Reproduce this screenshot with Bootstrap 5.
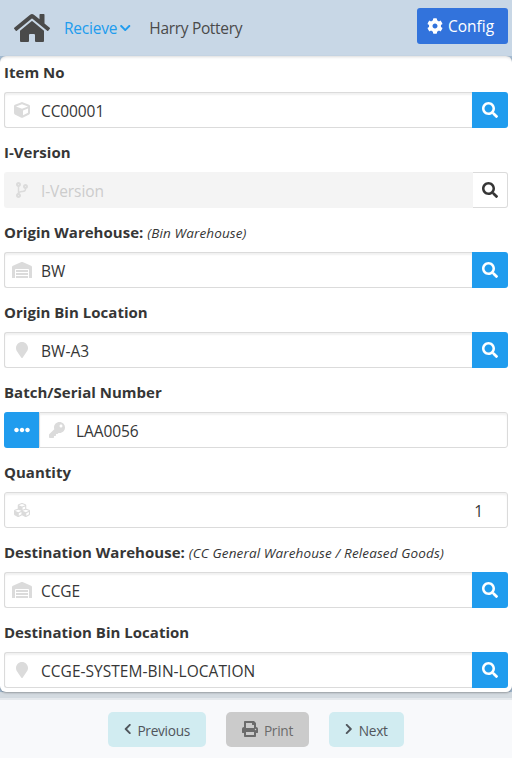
<!DOCTYPE html>
<html lang="en">
<head>
<meta charset="utf-8">
<meta name="viewport" content="width=device-width, initial-scale=1">
<title>Recieve</title>
<link href="https://cdn.jsdelivr.net/npm/bootstrap@5.3.0/dist/css/bootstrap.min.css" rel="stylesheet">
<style>
body{font-family:"Open Sans","Noto Sans",sans-serif;font-size:15.5px;line-height:24px;color:#363636;background:#a3bad0;height:758px;overflow:hidden}
.ico{fill:currentColor;height:16px;width:auto;display:block;flex:none}
.topbar{height:56px;background:#c8d7e6;color:#4a4a4a;padding:0 4px 0 14px}
.topbar .ico-home{height:32px}
.mode{color:#209cee;margin-left:14px;gap:3px;letter-spacing:-.2px}
.mode .ico{height:12px}
.user-name{margin-left:18.5px;letter-spacing:-.33px}
.btn-config{height:36px;width:91px;background:#3273dc;color:#fff;border-radius:3px;font-size:15.5px;gap:5px;margin-top:-4px}
.btn-config .ico{margin-left:-2px}
.btn-config span{padding-top:2px;margin-right:2px}
.panel{height:636px;background:#fff;border-radius:6px;padding:4px;gap:12px;box-shadow:0 1px 2px rgba(10,10,10,.3),inset 0 4px 3px -3px rgba(10,10,10,.15)}
.field-label{font-weight:700;margin-bottom:8px;height:24px;font-size:15px;letter-spacing:.02px;white-space:nowrap}
.field-label em{font-weight:400;font-size:13.5px;letter-spacing:.13px}
.box{height:36px;border:1px solid #dbdbdb;border-radius:3px;box-shadow:inset 0 2px 2px rgba(10,10,10,.06);background:#fff;min-width:0}
.box.has-end{border-right:0;border-radius:3px 0 0 3px}
.box.has-start{border-radius:0 3px 3px 0}
.box.off{background:#f4f4f4;border-color:#f4f4f4;box-shadow:none;color:#ccc}
.box .glyph{width:34px;color:#dbdbdb;margin-top:-1px}
.box .val{padding-left:2px;padding-top:2px;letter-spacing:-.1px}
.box .val.long{letter-spacing:.03px}
.act{width:36px;height:36px;background:#209cee;color:#fff;border-radius:0 3px 3px 0}
.act.start{width:35px;border-radius:3px 0 0 3px}
.act .ico{margin-top:-1px}
.act.plain{width:35px;background:#fff;color:#363636;border:1px solid #dbdbdb;border-left:0}
.foot{height:60px;background:#f8f9fb;gap:20px;padding-top:12px;box-shadow:0 0 0 2px #e4e8ec}
.strip{background:#d3dae0}
.step{height:35px;border-radius:5px;background:#d1ecf1;color:#50555b;font-size:13.7px;line-height:21px;gap:6px;letter-spacing:-.28px;padding-top:1px}
.step .ico{height:12px;margin-top:-3px}
.step.w1{width:98px}.step.w2{width:83px}.step.w3{width:75px}
.step.w2{background:#cbcbcb;color:#6b6b6b}.step.w2 .ico{height:16px}
</style>
</head>
<body class="d-flex flex-column">
<svg class="d-none" aria-hidden="true">
<symbol id="search" viewBox="0 0 512 512"><path d="M505 442.7L405.3 343c-4.5-4.5-10.6-7-17-7H372c27.6-35.3 44-79.7 44-128C416 93.1 322.9 0 208 0S0 93.1 0 208s93.1 208 208 208c48.3 0 92.7-16.4 128-44v16.3c0 6.4 2.5 12.5 7 17l99.7 99.7c9.4 9.4 24.6 9.4 33.9 0l28.3-28.3c9.4-9.4 9.4-24.6.1-34zM208 336c-70.7 0-128-57.2-128-128 0-70.7 57.2-128 128-128 70.7 0 128 57.2 128 128 0 70.7-57.2 128-128 128z"/></symbol>
<symbol id="warehouse" viewBox="0 0 640 512"><path d="M504 352H136.4c-4.4 0-8 3.6-8 8l-.1 48c0 4.4 3.6 8 8 8H504c4.4 0 8-3.6 8-8v-48c0-4.4-3.6-8-8-8zm0 96H136.1c-4.4 0-8 3.6-8 8l-.1 48c0 4.4 3.6 8 8 8h368c4.4 0 8-3.6 8-8v-48c0-4.4-3.6-8-8-8zm0-192H136.6c-4.4 0-8 3.6-8 8l-.1 48c0 4.4 3.6 8 8 8H504c4.4 0 8-3.6 8-8v-48c0-4.4-3.6-8-8-8zm106.5-139L338.4 3.7a48.15 48.15 0 0 0-36.9 0L29.5 117C11.7 124.5 0 141.9 0 161.3V504c0 4.4 3.6 8 8 8h80c4.4 0 8-3.6 8-8V256c0-17.6 14.6-32 32.6-32h382.8c18 0 32.6 14.4 32.6 32v248c0 4.4 3.6 8 8 8h80c4.4 0 8-3.6 8-8V161.3c0-19.4-11.7-36.8-29.5-44.3z"/></symbol>
<symbol id="marker" viewBox="0 0 384 512"><path d="M172.268 501.67C26.97 291.031 0 269.413 0 192 0 85.961 85.961 0 192 0s192 85.961 192 192c0 77.413-26.97 99.031-172.268 309.67-9.535 13.774-29.93 13.773-39.464 0z"/></symbol>
</svg>

<nav class="topbar d-flex align-items-center flex-shrink-0">
  <svg class="ico ico-home" width="36" viewBox="0 0 576 512"><path d="M280.37 148.26L96 300.11V464a16 16 0 0 0 16 16l112.06-.29a16 16 0 0 0 15.92-16V368a16 16 0 0 1 16-16h64a16 16 0 0 1 16 16v95.64a16 16 0 0 0 16 16.05L464 480a16 16 0 0 0 16-16V300L295.67 148.26a12.19 12.19 0 0 0-15.3 0zM571.6 251.47L488 182.56V44.05a12 12 0 0 0-12-12h-56a12 12 0 0 0-12 12v72.61L318.47 43a48 48 0 0 0-61 0L4.34 251.47a12 12 0 0 0-1.6 16.9l25.5 31A12 12 0 0 0 45.15 301l235.22-193.74a12.19 12.19 0 0 1 15.3 0L530.9 301a12 12 0 0 0 16.9-1.6l25.5-31a12 12 0 0 0-1.7-16.93z"/></svg>
  <div class="mode d-flex align-items-center"><span class="t-mode">Recieve</span><svg class="ico" viewBox="0 0 448 512"><path d="M207.029 381.476L12.686 187.132c-9.373-9.373-9.373-24.569 0-33.941l22.667-22.667c9.357-9.357 24.522-9.375 33.901-.04L224 284.505l154.745-154.021c9.379-9.335 24.544-9.317 33.901.04l22.667 22.667c9.373 9.373 9.373 24.569 0 33.941L240.971 381.476c-9.373 9.372-24.569 9.372-33.942 0z"/></svg></div>
  <span class="user-name">Harry Pottery</span>
  <button class="btn btn-config border-0 p-0 ms-auto d-flex align-items-center justify-content-center"><svg class="ico" viewBox="0 0 512 512"><path d="M487.4 315.7l-42.6-24.6c4.3-23.2 4.3-47 0-70.2l42.6-24.6c4.9-2.8 7.1-8.6 5.5-14-11.1-35.6-30-67.8-54.7-94.6-3.8-4.1-10-5.1-14.8-2.3L380.8 110c-17.9-15.4-38.5-27.3-60.8-35.1V25.8c0-5.6-3.9-10.5-9.4-11.7-36.7-8.2-74.3-7.8-109.2 0-5.5 1.2-9.4 6.1-9.4 11.7V75c-22.2 7.9-42.8 19.8-60.8 35.1L88.7 85.5c-4.9-2.8-11-1.9-14.8 2.3-24.7 26.7-43.6 58.9-54.7 94.6-1.7 5.4.6 11.2 5.5 14L67.3 221c-4.3 23.2-4.3 47 0 70.2l-42.6 24.6c-4.9 2.8-7.1 8.6-5.5 14 11.1 35.6 30 67.8 54.7 94.6 3.8 4.1 10 5.1 14.8 2.3l42.6-24.6c17.9 15.4 38.5 27.3 60.8 35.1v49.2c0 5.6 3.9 10.5 9.4 11.7 36.7 8.2 74.3 7.8 109.2 0 5.5-1.2 9.4-6.1 9.4-11.7v-49.2c22.2-7.9 42.8-19.8 60.8-35.1l42.6 24.6c4.9 2.8 11 1.9 14.8-2.3 24.7-26.7 43.6-58.9 54.7-94.6 1.5-5.5-.7-11.3-5.6-14.1zM256 336c-44.1 0-80-35.9-80-80s35.9-80 80-80 80 35.9 80 80-35.9 80-80 80z"/></svg><span>Config</span></button>
</nav>

<main class="panel d-flex flex-column flex-shrink-0 position-relative">
  <div>
    <div class="field-label"><span>Item No</span></div>
    <div class="d-flex"><div class="box has-end flex-grow-1 d-flex align-items-center"><span class="glyph d-flex justify-content-center"><svg class="ico" viewBox="0 0 512 512"><path d="M239.1 6.3l-208 78c-18.7 7-31.1 25-31.1 45v225.1c0 18.2 10.3 34.8 26.5 42.9l208 104c13.5 6.8 29.4 6.8 42.9 0l208-104c16.3-8.1 26.5-24.8 26.5-42.9V129.3c0-20-12.4-37.9-31.1-44.9l-208-78C262 2.2 250 2.2 239.1 6.3zM256 68.4l192 72v1.1l-192 78-192-78v-1.1l192-72zm32 356V275.5l160-65v133.9l-160 80z"/></svg></span><span class="val">CC00001</span></div><button class="act border-0 p-0 d-flex align-items-center justify-content-center" aria-label="Search"><svg class="ico" viewBox="0 0 512 512"><use href="#search"/></svg></button></div>
  </div>
  <div>
    <div class="field-label"><span>I-Version</span></div>
    <div class="d-flex"><div class="box off has-end flex-grow-1 d-flex align-items-center"><span class="glyph d-flex justify-content-center"><svg class="ico" viewBox="0 0 384 512"><path d="M384 144c0-44.2-35.8-80-80-80s-80 35.8-80 80c0 36.4 24.3 67.1 57.5 76.8-.6 16.1-4.2 28.5-11 36.9-15.4 19.2-49.3 22.4-85.2 25.7-28.2 2.6-57.4 5.4-81.3 16.9v-144c32.5-10.2 56-40.5 56-76.3 0-44.2-35.8-80-80-80S0 35.8 0 80c0 35.8 23.5 66.1 56 76.3v199.3C23.5 365.9 0 396.2 0 432c0 44.2 35.8 80 80 80s80-35.8 80-80c0-34-21.2-63.1-51.2-74.6 3.1-5.2 7.8-9.8 14.9-13.4 16.2-8.2 40.4-10.4 66.1-12.8 42.2-3.9 90-8.4 118.2-43.4 14-17.4 21.1-39.8 21.6-67.9 31.6-10.8 54.4-40.7 54.4-75.9zM80 64c8.8 0 16 7.2 16 16s-7.2 16-16 16-16-7.2-16-16 7.2-16 16-16zm0 384c-8.8 0-16-7.2-16-16s7.2-16 16-16 16 7.2 16 16-7.2 16-16 16zm224-320c8.8 0 16 7.2 16 16s-7.2 16-16 16-16-7.2-16-16 7.2-16 16-16z"/></svg></span><span class="val">I-Version</span></div><button class="act plain p-0 d-flex align-items-center justify-content-center" aria-label="Search"><svg class="ico" viewBox="0 0 512 512"><use href="#search"/></svg></button></div>
  </div>
  <div>
    <div class="field-label"><span>Origin Warehouse:</span> <em>(Bin Warehouse)</em></div>
    <div class="d-flex"><div class="box has-end flex-grow-1 d-flex align-items-center"><span class="glyph d-flex justify-content-center"><svg class="ico" viewBox="0 0 640 512"><use href="#warehouse"/></svg></span><span class="val">BW</span></div><button class="act border-0 p-0 d-flex align-items-center justify-content-center" aria-label="Search"><svg class="ico" viewBox="0 0 512 512"><use href="#search"/></svg></button></div>
  </div>
  <div>
    <div class="field-label"><span>Origin Bin Location</span></div>
    <div class="d-flex"><div class="box has-end flex-grow-1 d-flex align-items-center"><span class="glyph d-flex justify-content-center"><svg class="ico" viewBox="0 0 384 512"><use href="#marker"/></svg></span><span class="val long">BW-A3</span></div><button class="act border-0 p-0 d-flex align-items-center justify-content-center" aria-label="Search"><svg class="ico" viewBox="0 0 512 512"><use href="#search"/></svg></button></div>
  </div>
  <div>
    <div class="field-label"><span>Batch/Serial Number</span></div>
    <div class="d-flex"><button class="act start border-0 p-0 d-flex align-items-center justify-content-center" aria-label="More"><svg class="ico" viewBox="0 0 512 512"><path d="M328 256c0 39.8-32.2 72-72 72s-72-32.2-72-72 32.2-72 72-72 72 32.2 72 72zm104-72c-39.8 0-72 32.2-72 72s32.2 72 72 72 72-32.2 72-72-32.2-72-72-72zm-352 0c-39.8 0-72 32.2-72 72s32.2 72 72 72 72-32.2 72-72-32.2-72-72-72z"/></svg></button><div class="box has-start flex-grow-1 d-flex align-items-center"><span class="glyph d-flex justify-content-center"><svg class="ico" viewBox="0 0 512 512"><path d="M512 176.001C512 273.203 433.202 352 336 352c-11.22 0-22.19-1.062-32.827-3.069l-24.012 27.014A23.999 23.999 0 0 1 261.223 384H224v40c0 13.255-10.745 24-24 24h-40v40c0 13.255-10.745 24-24 24H24c-13.255 0-24-10.745-24-24v-78.059c0-6.365 2.529-12.47 7.029-16.971l161.802-161.802C163.108 213.814 160 195.271 160 176 160 78.798 238.797.001 335.999 0 433.488-.001 512 78.511 512 176.001zM336 128c0 26.51 21.49 48 48 48s48-21.49 48-48-21.49-48-48-48-48 21.49-48 48z"/></svg></span><span class="val">LAA0056</span></div></div>
  </div>
  <div>
    <div class="field-label"><span>Quantity</span></div>
    <div class="box d-flex align-items-center"><span class="glyph d-flex justify-content-center"><svg class="ico" viewBox="0 0 512 512"><path d="M488.6 250.2L392 214V105.5c0-15-9.3-28.4-23.4-33.7l-100-37.5c-8.1-3.1-17.1-3.1-25.3 0l-100 37.5c-14.1 5.3-23.4 18.7-23.4 33.7V214l-96.6 36.2C9.3 255.5 0 268.9 0 283.9V394c0 13.6 7.7 26.1 19.9 32.2l100 50c10.1 5.1 22.1 5.1 32.2 0l103.9-52 103.9 52c10.1 5.1 22.1 5.1 32.2 0l100-50c12.2-6.1 19.9-18.6 19.9-32.2V283.9c0-15-9.3-28.4-23.4-33.7zM358 214.8l-85 31.9v-68.2l85-37v73.3zM154 104.1l102-38.2 102 38.2v.6l-102 41.4-102-41.4v-.6zm84 291.1l-85 42.5v-79.1l85-38.8v75.4zm0-112l-102 41.4-102-41.4v-.6l102-38.2 102 38.2v.6zm240 112l-85 42.5v-79.1l85-38.8v75.4zm0-112l-102 41.4-102-41.4v-.6l102-38.2 102 38.2v.6z"/></svg></span><span class="val ms-auto me-4">1</span></div>
  </div>
  <div>
    <div class="field-label"><span>Destination Warehouse:</span> <em>(CC General Warehouse / Released Goods)</em></div>
    <div class="d-flex"><div class="box has-end flex-grow-1 d-flex align-items-center"><span class="glyph d-flex justify-content-center"><svg class="ico" viewBox="0 0 640 512"><use href="#warehouse"/></svg></span><span class="val">CCGE</span></div><button class="act border-0 p-0 d-flex align-items-center justify-content-center" aria-label="Search"><svg class="ico" viewBox="0 0 512 512"><use href="#search"/></svg></button></div>
  </div>
  <div>
    <div class="field-label"><span>Destination Bin Location</span></div>
    <div class="d-flex"><div class="box has-end flex-grow-1 d-flex align-items-center"><span class="glyph d-flex justify-content-center"><svg class="ico" viewBox="0 0 384 512"><use href="#marker"/></svg></span><span class="val long">CCGE-SYSTEM-BIN-LOCATION</span></div><button class="act border-0 p-0 d-flex align-items-center justify-content-center" aria-label="Search"><svg class="ico" viewBox="0 0 512 512"><use href="#search"/></svg></button></div>
  </div>
</main>

<div class="strip flex-grow-1">
  <footer class="foot d-flex align-items-start justify-content-center mt-2">
    <button class="step w1 btn border-0 px-0 pb-0 d-flex align-items-center justify-content-center"><svg class="ico" viewBox="0 0 320 512"><path d="M34.52 239.03L228.87 44.69c9.37-9.37 24.57-9.37 33.94 0l22.67 22.67c9.36 9.36 9.37 24.52.04 33.9L131.49 256l154.02 154.75c9.34 9.38 9.32 24.54-.04 33.9l-22.67 22.67c-9.37 9.37-24.57 9.37-33.94 0L34.52 272.97c-9.37-9.37-9.37-24.57 0-33.94z"/></svg><span>Previous</span></button>
    <button class="step w2 btn border-0 px-0 pb-0 d-flex align-items-center justify-content-center"><svg class="ico" viewBox="0 0 512 512"><path d="M448 192V77.25c0-8.49-3.37-16.62-9.37-22.63L393.37 9.37c-6-6-14.14-9.37-22.63-9.37H96C78.33 0 64 14.33 64 32v160c-35.35 0-64 28.65-64 64v112c0 8.84 7.16 16 16 16h48v96c0 17.67 14.33 32 32 32h320c17.67 0 32-14.33 32-32v-96h48c8.84 0 16-7.16 16-16V256c0-35.35-28.65-64-64-64zm-64 256H128v-96h256v96zm0-224H128V64h192v48c0 8.84 7.16 16 16 16h48v96zm48 72c-13.25 0-24-10.75-24-24 0-13.26 10.75-24 24-24s24 10.74 24 24c0 13.25-10.75 24-24 24z"/></svg><span>Print</span></button>
    <button class="step w3 btn border-0 px-0 pb-0 d-flex align-items-center justify-content-center"><svg class="ico" viewBox="0 0 320 512"><path d="M285.476 272.971L91.132 467.314c-9.373 9.373-24.569 9.373-33.941 0l-22.667-22.667c-9.357-9.357-9.375-24.522-.04-33.901L188.505 256 34.484 101.255c-9.335-9.379-9.317-24.544.04-33.901l22.667-22.667c9.373-9.373 24.569-9.373 33.941 0L285.475 239.03c9.373 9.372 9.373 24.568.001 33.941z"/></svg><span>Next</span></button>
  </footer>
</div>
</body>
</html>
